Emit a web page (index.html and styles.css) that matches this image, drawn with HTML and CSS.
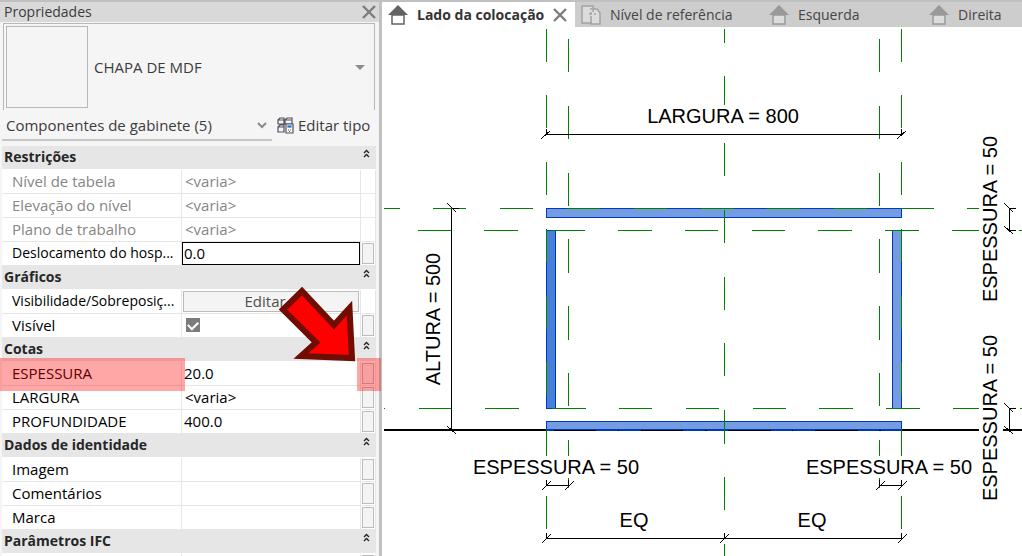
FILE: index.html
```html
<!DOCTYPE html>
<html lang="pt-BR">
<head>
<meta charset="utf-8">
<title>Propriedades</title>
<link rel="stylesheet" href="styles.css">
</head>
<body>
<svg class="defs" aria-hidden="true">
  <symbol id="home" viewBox="0 0 20 20"><path d="M0 10 10 0l10 10z" fill="currentColor"/><path d="M4 10h12v9H4z" fill="var(--fill)" stroke="currentColor" stroke-width="1.5"/></symbol>
  <symbol id="cross" viewBox="0 0 14 14"><path d="M1 1l12 12M13 1 1 13" stroke="currentColor" stroke-width="2.4" fill="none"/></symbol>
  <symbol id="collapse" viewBox="0 0 7 9"><path d="M1 4l2.500-2.500L6 4M1 8l2.500-2.500L6 8" stroke="currentColor" stroke-width="1.300" fill="none"/></symbol>
</svg>
<div class="app">
  <aside class="panel">
    <header class="title"><span>Propriedades</span><button class="plain" aria-label="Fechar"><svg class="x"><use href="#cross"/></svg></button></header>
    <button class="type">
      <span class="thumb"></span><span class="type-name">CHAPA DE MDF</span>
      <svg class="caret" viewBox="0 0 10 5"><path d="M0 0h10L5 5z" fill="#8c8c8c"/></svg>
    </button>
    <div class="filter">
      <div class="select-wrap">
        <select aria-label="Filtro"><option>Componentes de gabinete (5)</option></select>
        <svg class="chev" viewBox="0 0 10 7"><path d="M1 1l4 4 4-4" fill="none" stroke="#8a8a8a" stroke-width="2"/></svg>
      </div>
      <button class="plain edit-type">
        <svg class="type-icon" viewBox="0 0 17 17" fill="#f5f5f5" stroke="#50505c" stroke-width="1.200"><path d="M1 3l2-2h4v6H1zM8 3l2-2h5v6H8zM1 10l2-2h4v7H1zM1 3h6M8 3h6M1 10h6"/><path d="M9 7h7v9H9z" fill="#fff"/><path d="M11 9h3v1h-3z" fill="#1878c8" stroke="#1878c8"/><path d="M11 13h1m1 0h1m-2 1.500h1"/></svg>
        Editar tipo
      </button>
    </div>
    <table class="props">
      <colgroup><col class="c-name"><col><col class="c-act"></colgroup>
      <tbody>
        <tr class="head"><th colspan="2">Restrições</th><td><button class="plain" aria-label="Recolher"><svg class="col"><use href="#collapse"/></svg></button></td></tr>
        <tr class="off"><th>Nível de tabela</th><td>&lt;varia&gt;</td><td></td></tr>
        <tr class="off"><th>Elevação do nível</th><td>&lt;varia&gt;</td><td></td></tr>
        <tr class="off"><th>Plano de trabalho</th><td>&lt;varia&gt;</td><td></td></tr>
        <tr><th class="long"><label for="desl">Deslocamento do hosp...</label></th><td class="field"><input id="desl" class="edit" value="0.0"></td><td><button class="assoc" aria-label="Associar"></button></td></tr>
      </tbody>
      <tbody>
        <tr class="head"><th colspan="2">Gráficos</th><td><button class="plain" aria-label="Recolher"><svg class="col"><use href="#collapse"/></svg></button></td></tr>
        <tr><th class="long">Visibilidade/Sobreposiç...</th><td class="field"><button class="editar">Editar...</button></td><td></td></tr>
        <tr><th><label for="vis">Visível</label></th><td><input type="checkbox" id="vis" class="check" checked></td><td><button class="assoc" aria-label="Associar"></button></td></tr>
      </tbody>
      <tbody>
        <tr class="head"><th colspan="2">Cotas</th><td><button class="plain" aria-label="Recolher"><svg class="col"><use href="#collapse"/></svg></button></td></tr>
        <tr><th>ESPESSURA</th><td class="num">20.0</td><td><button class="assoc" aria-label="Associar"></button></td></tr>
        <tr><th>LARGURA</th><td>&lt;varia&gt;</td><td><button class="assoc" aria-label="Associar"></button></td></tr>
        <tr><th>PROFUNDIDADE</th><td class="num">400.0</td><td><button class="assoc" aria-label="Associar"></button></td></tr>
      </tbody>
      <tbody>
        <tr class="head"><th colspan="2">Dados de identidade</th><td><button class="plain" aria-label="Recolher"><svg class="col"><use href="#collapse"/></svg></button></td></tr>
        <tr><th>Imagem</th><td></td><td><button class="assoc" aria-label="Associar"></button></td></tr>
        <tr><th>Comentários</th><td></td><td><button class="assoc" aria-label="Associar"></button></td></tr>
        <tr><th>Marca</th><td></td><td><button class="assoc" aria-label="Associar"></button></td></tr>
      </tbody>
      <tbody>
        <tr class="head"><th colspan="2">Parâmetros IFC</th><td><button class="plain" aria-label="Recolher"><svg class="col"><use href="#collapse"/></svg></button></td></tr>
        <tr><th></th><td></td><td><button class="assoc" aria-label="Associar"></button></td></tr>
      </tbody>
    </table>
    <svg class="marks" viewBox="0 0 382 400" aria-hidden="true">
      <path d="M0 356h185v33H0zM357 356h24v33h-24z" fill="#f00" fill-opacity=".35"/>
      <path d="M302 289 334 323 349.500 306 352 356 301 354 316 340.500 283 307.500z" fill="#f00" stroke="#700c00" stroke-width="6"/>
    </svg>
  </aside>
  <main class="view">
    <nav class="tabs">
      <div class="tab active"><svg class="ico"><use href="#home"/></svg><span>Lado da colocação</span><button class="plain" aria-label="Fechar"><svg class="x"><use href="#cross"/></svg></button></div>
      <div class="tab plan"><svg class="ico" viewBox="0 0 20 20" fill="#dcdcdc" stroke="#a3a3a3" stroke-width="1.500"><path d="M1 1h11v3h4l3 4v11h-9v-1H1z"/><path d="M10 3v2m0 2v2m0 2v8M8 9h3m2 0h2M12 4v3" fill="none"/></svg><span>Nível de referência</span></div>
      <div class="tab"><svg class="ico"><use href="#home"/></svg><span>Esquerda</span></div>
      <div class="tab"><svg class="ico"><use href="#home"/></svg><span>Direita</span></div>
    </nav>
    <svg class="drawing" viewBox="382 27 640 529" role="img" aria-label="Elevação do gabinete">
      <path d="M384 429H546V431H384zM901 429H1022V431H901z" fill="#000"/>
      <g transform="translate(.5 .5)" stroke="#0038b8" fill="#739de0"><path d="M546 208H901V217H546zM892 230H901V408H892zM546 421H901V430H546z"/><path d="M546 230H555V408H546z" fill="#4680d8"/><path d="M546 429H901"/></g>
      <path transform="translate(0 .5)" d="M554 430h42M618 430h1M641 430h42M705 430h2M728 430h43M792 430h1M815 430h43M879 430h2" stroke="#000"/>
      <g stroke="#008000" transform="translate(.5 0)">
        <path d="M546 29v33M546 95v33M546 162v33M546 229v33M546 296v33M546 362v33M546 429v33M546 496v33"/>
        <path d="M901 29v33M901 95v33M901 162v33M901 229v33M901 296v33M901 362v33M901 429v33M901 496v33"/>
        <path d="M568 39v33M568 106v33M568 173v33M568 239v34M568 306v34M568 373v33M568 440v17M568 478v10"/>
        <path d="M879 39v33M879 106v33M879 173v33M879 239v34M879 306v34M879 373v33M879 440v17M879 478v10"/>
        <path d="M724 29v14M724 76v33M724 143v33M724 210v33M724 277v33M724 343v33M724 410v34M724 477v33M724 544v12"/>
      </g>
      <g stroke="#008000" transform="translate(0 .5)">
        <path d="M384 208h16M433 208h33M500 208h33M567 208h33M634 208h33M701 208h33M767 208h33M834 208h33M901 208h33M967 208h33"/>
        <path d="M418 230h33M484 230h34M551 230h34M618 230h34M685 230h33M752 230h33M818 230h34M885 230h34M952 230h34M1019 230h3"/>
        <path d="M384 408h1M419 408h33M485 408h34M552 408h34M619 408h33M686 408h33M753 408h33M819 408h34M886 408h34M953 408h33M1020 408h2"/>
      </g>
      <path d="M644 105h160v22H644zM470 456h172v21H470zM803 456h172v21H803zM979 132h24v172h-24zM979 331h24v172h-24z" fill="#fff"/>
      <g stroke="#000" transform="translate(.5 .5)">
        <path fill="none" d="M546 134H901M546 128v6M901 128v6M451 208V430M451 208h7M1009 208v22M1009 208h6M1009 230h6M1009 408v22M1009 408h6M546 485h22M546 479v6M568 479v6M879 485h22M879 479v6M901 479v6M546 538H901M546 532v6M724 532v6M901 532v6"/>
        <path d="M541 138l9-8M897 138l9-8M447 203l9 9M447 426l9 8M1004 203l9 9M1004 226l9 8M1004 403l9 9M1004 426l9 8M541 490l9-9M564 490l9-9M875 490l9-9M897 490l9-9M541 543l9-9M719 543l9-9M897 543l9-9"/>
      </g>
      <g class="dims">
        <text x="723" y="123">LARGURA = 800</text>
        <text x="556" y="474">ESPESSURA = 50</text>
        <text x="889" y="474">ESPESSURA = 50</text>
        <text x="634" y="527">EQ</text>
        <text x="812" y="527">EQ</text>
        <text transform="translate(440 319) rotate(-90)">ALTURA = 500</text>
        <text transform="translate(997 219) rotate(-90)">ESPESSURA = 50</text>
        <text transform="translate(997 418) rotate(-90)">ESPESSURA = 50</text>
      </g>
    </svg>
  </main>
</div>
</body>
</html>
```
FILE: styles.css
```css
* { box-sizing: border-box; }
body { margin: 0; font: 15px/20px "Open Sans", "Noto Sans", sans-serif; color: #3c3c3c; }
button, input, select { font: inherit; color: inherit; }
button { padding: 0; }
svg { display: block; }
.defs { position: absolute; width: 0; height: 0; }
.app { display: grid; grid-template-columns: 382px 1fr; height: 100vh; overflow: hidden; border-top: 2px solid #c0c0c0; background: #fff; }
.panel { position: relative; background: #f5f5f5; border-right: 3px solid #c0c0c0; }
.plain { border: 0; background: none; }
.title { display: flex; justify-content: space-between; align-items: center; height: 20px; padding: 0 3px 0 4px; background: #d9d9d9; font-size: 14px; }
.x { width: 14px; height: 14px; color: #7d7d7d; }
.type { display: flex; align-items: center; width: calc(100% - 7px); height: 87px; margin: 1px 4px 0 3px; padding: 0 9px 0 2px; border: 1px solid #b8b8b8; border-bottom: 0; background: none; text-align: left; }
.thumb { width: 82px; height: 82px; border: 1px solid #b8b8b8; }
.type-name { flex: 1; padding-left: 6px; }
.caret { width: 10px; height: 5px; }
.filter { display: flex; height: 36px; padding-left: 2px; }
.select-wrap { position: relative; width: 270px; height: 31px; border-bottom: 2px solid #c6c6c6; }
.select-wrap select { width: 100%; height: 29px; padding: 0 0 0 4px; border: 0; background: none; appearance: none; }
.chev { position: absolute; right: 5px; top: 12px; width: 10px; height: 7px; }
.edit-type { display: flex; align-items: center; gap: 4px; height: 30px; padding-left: 5px; white-space: nowrap; }
.type-icon { width: 17px; height: 17px; }
.props { width: calc(100% - 5px); margin: 0 3px 0 2px; border-collapse: separate; border-spacing: 0; table-layout: fixed; background: #fff; color: #000; }
.c-name { width: 180px; }
.c-act { width: 15px; }
.props tr { height: 24px; }
.props th, .props td { height: 24px; padding: 0 0 2px 3px; border-right: 1px solid #e6e6e6; border-bottom: 1px solid #e6e6e6; font-weight: 400; text-align: left; white-space: nowrap; line-height: 20px; }
.props th { padding-left: 10px; }
.props td:last-child { padding: 0 0 0 1px; }
.props .long { font-size: 14px; }
.props .num { padding-left: 2px; }
.props .head th, .props .head td { border-right: 0; border-bottom-color: #fff; background: #e6e6e6; color: #262626; }
.props .head th { padding-left: 2px; font-size: 14px; font-weight: 700; }
.props .head td:last-child { padding-left: 2px; vertical-align: top; }
.head button { display: block; padding-top: 3px; }
.col { width: 7px; height: 9px; color: #222; }
.props .off th, .props .off td { color: #868686; }
.props .field { padding: 0; }
.edit { display: block; width: 100%; height: 23px; padding: 0 1px 2px; border: 1px solid #000; background: #fff; }
.editar { display: block; width: calc(100% - 2px); height: 21px; margin: 0 1px; line-height: 19px; border: 1px solid #bcbcbc; background: #f4f4f4; color: #505050; }
.assoc { display: block; width: 12px; height: 21px; border: 1px solid #bcbcbc; background: #f4f4f4; }
.check { appearance: none; display: block; width: 14px; height: 14px; margin: 0 0 0 1px; background: #7c7c7c; }
.check::after { content: ""; display: block; width: 8px; height: 5px; margin: 0 auto; border: solid #fff; border-width: 0 0 2px 2px; transform: translateY(3px) rotate(-45deg); }
.marks { position: absolute; left: 0; top: 0; width: 382px; height: 400px; pointer-events: none; overflow: visible; }
.view { min-width: 0; }
.tabs { display: flex; height: 25px; background: #cdcdcd; font-size: 14px; }
.tab { display: flex; align-items: center; gap: 9px; min-width: 160px; padding-left: 6px; white-space: nowrap; color: #464646; --fill: #dcdcdc; }
.tab .ico { width: 20px; height: 20px; color: #999; flex: none; }
.tab.active { min-width: 193px; background: #fff; font-weight: 700; color: #333; --fill: #fff; }
.tab.active .ico { color: #636363; }
.tab.plan { min-width: 188px; }
.drawing { width: 100%; shape-rendering: crispEdges; }
.dims { font: 20px "Liberation Sans", Arial, sans-serif; fill: #000; text-anchor: middle; }
```
